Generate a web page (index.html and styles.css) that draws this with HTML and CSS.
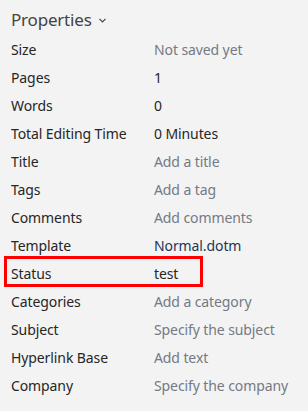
FILE: index.html
```html
<!DOCTYPE html>
<html lang="en">
<head>
    <meta charset="UTF-8">
    <meta name="viewport" content="width=device-width, initial-scale=1.0">
    <title>Properties</title>
    <link rel="stylesheet" href="styles.css">
</head>
<body>
    <div class="panel">
        <div class="header">
            <span class="title">Properties</span>
            <svg class="chevron" width="7" height="5" viewBox="0 0 7 5"><path d="M0.5 0.8 L3.5 3.8 L6.5 0.8" fill="none" stroke="#444" stroke-width="1.2"/></svg>
        </div>
        <div class="props">
            <div class="row"><span class="label">Size</span><span class="value muted">Not saved yet</span></div>
            <div class="row"><span class="label">Pages</span><span class="value">1</span></div>
            <div class="row"><span class="label">Words</span><span class="value">0</span></div>
            <div class="row"><span class="label">Total Editing Time</span><span class="value">0 Minutes</span></div>
            <div class="row"><span class="label">Title</span><span class="value muted">Add a title</span></div>
            <div class="row"><span class="label">Tags</span><span class="value muted">Add a tag</span></div>
            <div class="row"><span class="label">Comments</span><span class="value muted">Add comments</span></div>
            <div class="row"><span class="label">Template</span><span class="value link">Normal.dotm</span></div>
            <div class="row highlight"><span class="label">Status</span><span class="value">test</span></div>
            <div class="row"><span class="label">Categories</span><span class="value muted">Add a category</span></div>
            <div class="row"><span class="label">Subject</span><span class="value muted">Specify the subject</span></div>
            <div class="row"><span class="label">Hyperlink Base</span><span class="value muted">Add text</span></div>
            <div class="row"><span class="label">Company</span><span class="value muted">Specify the company</span></div>
        </div>
    </div>
</body>
</html>
```

FILE: styles.css
```css
body {
    margin: 0;
    background-color: #f3f3f3;
    font-family: "Noto Sans", "Open Sans", sans-serif;
    color: #262626;
}
.panel {
    padding: 3px 0 0 11px;
}
.header {
    display: flex;
    align-items: center;
    gap: 7px;
    height: 32px;
}
.title {
    font-size: 17px;
    letter-spacing: -0.2px;
    color: #444444;
}
.chevron {
    margin-top: 3px;
}
.props {
    display: flex;
    flex-direction: column;
}
.row {
    display: grid;
    grid-template-columns: 143px auto;
    height: 28px;
    align-items: center;
    font-size: 14px;
    letter-spacing: -0.1px;
    position: relative;
}
.value.muted {
    color: #737a84;
}
.value.link {
    color: #1f3555;
}
.highlight::after {
    content: "";
    position: absolute;
    left: -7px;
    top: -3px;
    width: 193px;
    height: 25px;
    border: 3px solid #ff0000;
}
```
